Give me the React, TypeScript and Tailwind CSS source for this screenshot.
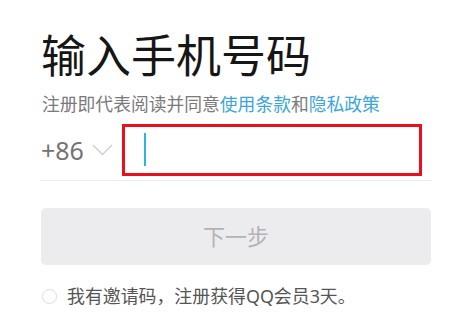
import React from "react";

export default function App() {
  const font = { fontFamily: '"Noto Sans", "Noto Sans CJK SC", sans-serif' };
  return (
    <div className="w-[449px] h-[312px] bg-white overflow-hidden" style={font}>
      <div className="pl-[40px] pr-[17px] pt-[33px] flex flex-col">
        <div className="pl-[1px] text-[45px] leading-[45px] text-[#161616] font-normal tracking-[0px]">
          输入手机号码
        </div>
        <div className="mt-[16px] pl-[2px] text-[17.8px] leading-[20px] text-[#7a7a7a] whitespace-nowrap">
          注册即代表阅读并同意<span className="text-[#3aa6d9]">使用条款</span>和<span className="text-[#3aa6d9]">隐私政策</span>
        </div>
        <div className="mt-[5px] h-[62px] flex items-center border-b border-[#ececec]">
          <span className="text-[25px] leading-[26px] text-[#737373] ml-[1px]">+86</span>
          <svg className="ml-[8px]" width="21" height="12" viewBox="0 0 21 12">
            <path d="M1 1 L10.5 10.5 L20 1" fill="none" stroke="#cfcfcf" strokeWidth="1.4" />
          </svg>
          <div className="ml-[9px] w-[300px] h-[52px] border-[3px] border-[#e8101a] flex items-center pl-[19px]">
            <div className="w-[2px] h-[33px] bg-[#27b6e8]" />
          </div>
        </div>
        <div className="mt-[27px] ml-[1px] w-[390px] h-[57px] rounded-[5px] bg-[#ececee] flex items-center justify-center text-[22px] text-[#b3b3b5]">
          下一步
        </div>
        <div className="mt-[21px] flex items-center ml-[2px]">
          <div className="w-[15px] h-[15px] rounded-full border border-[#dcdcdc]" />
          <span className="ml-[10px] text-[17.9px] leading-[20px] text-[#555555] whitespace-nowrap">
            我有邀请码，注册获得QQ会员3天。
          </span>
        </div>
      </div>
    </div>
  );
}
